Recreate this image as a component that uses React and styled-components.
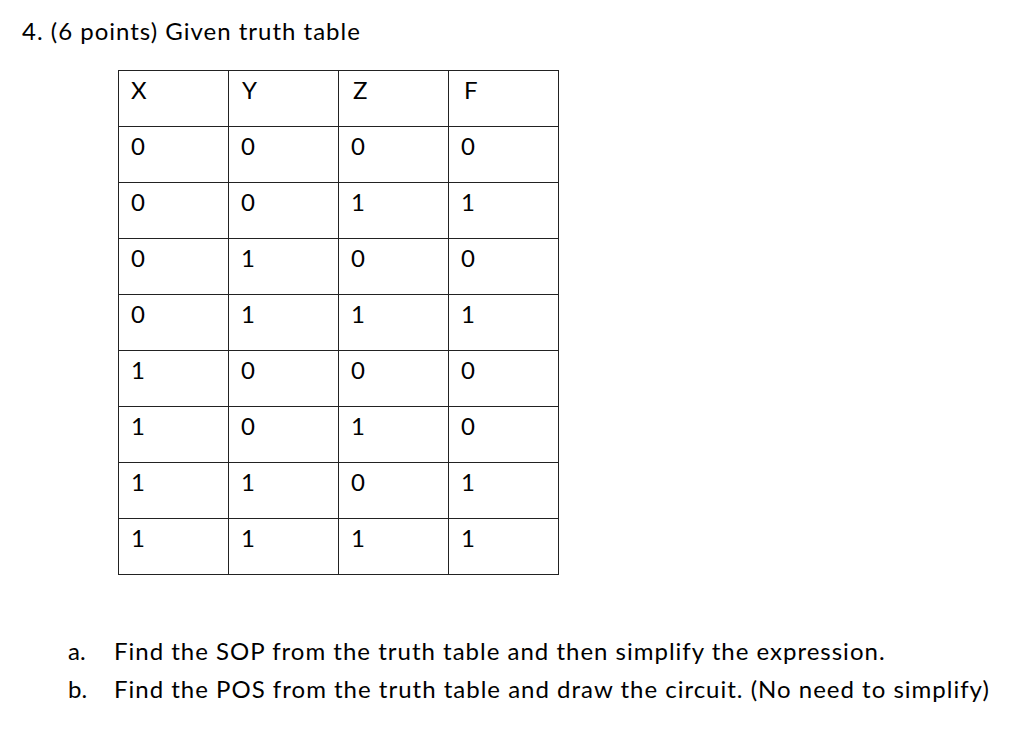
import React from 'react';
import styled, { createGlobalStyle } from 'styled-components';

const Global = createGlobalStyle`
    body {
        margin: 0;
        background: #fff;
        color: #000;
        font-family: Lato, "Open Sans", sans-serif;
    }
`;

const Page = styled.div`
    width: 1024px;
    height: 734px;
    padding: 16px 0 0 22px;
    box-sizing: border-box;
`;

const Title = styled.div`
    font-size: 24px;
    line-height: 30px;
    letter-spacing: 1px;
`;

const Table = styled.table`
    border-collapse: collapse;
    margin: 24px 0 0 96px;

    td {
        width: 110px;
        height: 56px;
        box-sizing: border-box;
        border: 1.5px solid #222;
        padding: 7px 0 0 12px;
        vertical-align: top;
        font-size: 24px;
        line-height: 24px;
    }
`;

const HeadCell = styled.td`
    padding-left: ${(p) => p.$pad}px !important;
`;

const List = styled.ol`
    list-style: none;
    margin: 57px 0 0 46px;
    padding: 0;
`;

const Item = styled.li`
    display: flex;
    font-size: 24px;
    line-height: 38px;
    letter-spacing: 1px;

    span {
        width: 46px;
        letter-spacing: 0;
    }
`;

const header = ['X', 'Y', 'Z', 'F'];
const headPad = [12, 13, 14, 15];
const rows = [
    [0, 0, 0, 0],
    [0, 0, 1, 1],
    [0, 1, 0, 0],
    [0, 1, 1, 1],
    [1, 0, 0, 0],
    [1, 0, 1, 0],
    [1, 1, 0, 1],
    [1, 1, 1, 1],
];

const App = () => {
    return (
        <Page>
            <Global />
            <Title>4. (6 points) Given truth table</Title>
            <Table>
                <tbody>
                    <tr>
                        {header.map((h, idx) => (
                            <HeadCell key={`h-${idx}`} $pad={headPad[idx]}>
                                {h}
                            </HeadCell>
                        ))}
                    </tr>
                    {rows.map((row, idx) => (
                        <tr key={`row-${idx}`}>
                            {row.map((cell, i) => (
                                <td key={`cell-${i}`}>{cell}</td>
                            ))}
                        </tr>
                    ))}
                </tbody>
            </Table>
            <List>
                <Item>
                    <span>a.</span>
                    Find the SOP from the truth table and then simplify the expression.
                </Item>
                <Item>
                    <span>b.</span>
                    Find the POS from the truth table and draw the circuit. (No need to simplify)
                </Item>
            </List>
        </Page>
    );
};

export default App;
